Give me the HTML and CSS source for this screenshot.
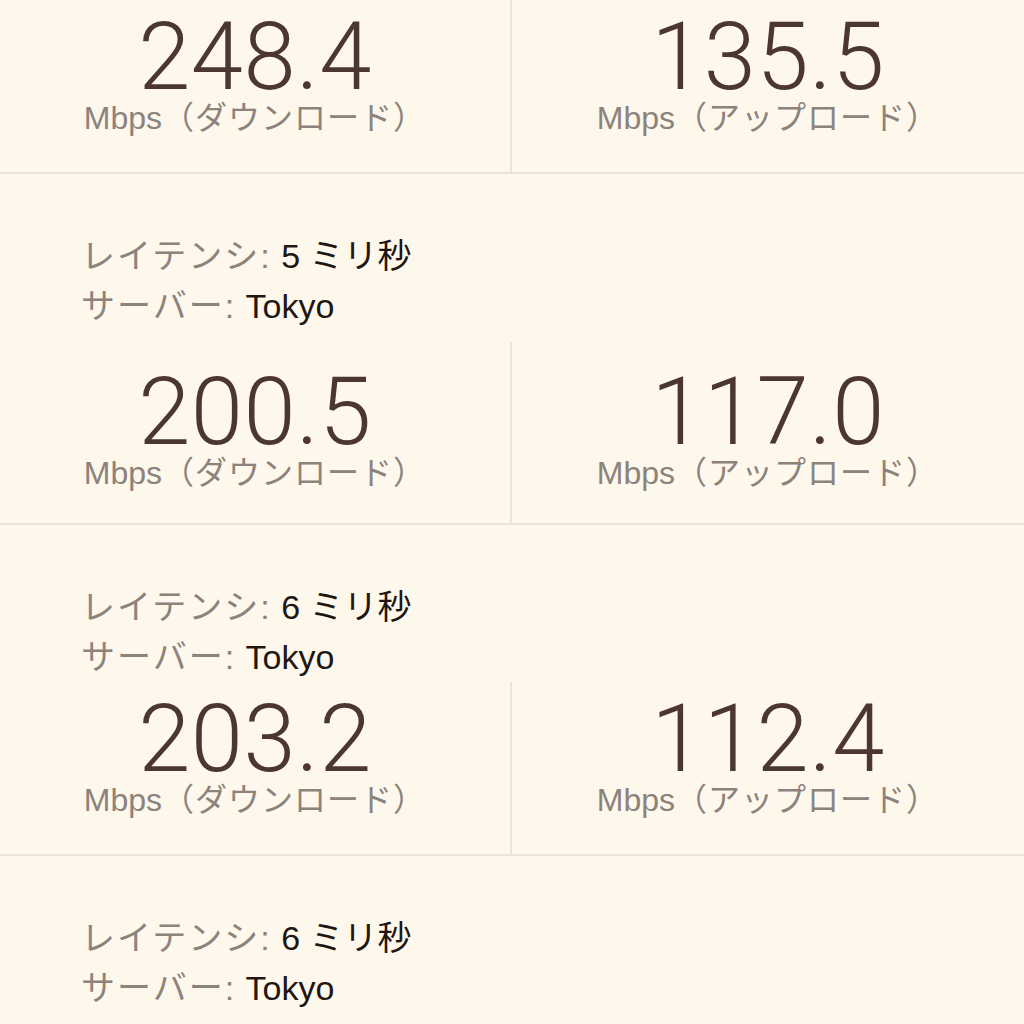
FILE: index.html
```html
<!DOCTYPE html>
<html>
<head>
<meta charset="UTF-8">
<title>speed results</title>
<link rel="stylesheet" href="styles.css">
</head>
<body>
<div class="results">

  <div class="speeds">
    <div class="speed">
      <div class="speed_value">248.4</div>
      <div class="speed_unit">Mbps<span class="jp">（ダウンロード）</span></div>
    </div>
    <div class="speed">
      <div class="speed_value">135.5</div>
      <div class="speed_unit">Mbps<span class="jp">（アップロード）</span></div>
    </div>
  </div>
  <div class="meta">
    <div class="meta_row"><span class="meta_label">レイテンシ:</span> <span class="meta_value">5 ミリ秒</span></div>
    <div class="meta_row"><span class="meta_label">サーバー:</span> <span class="meta_value">Tokyo</span></div>
  </div>

  <div class="speeds speeds_tall">
    <div class="speed">
      <div class="speed_value">200.5</div>
      <div class="speed_unit">Mbps<span class="jp">（ダウンロード）</span></div>
    </div>
    <div class="speed">
      <div class="speed_value">117.0</div>
      <div class="speed_unit">Mbps<span class="jp">（アップロード）</span></div>
    </div>
  </div>
  <div class="meta">
    <div class="meta_row"><span class="meta_label">レイテンシ:</span> <span class="meta_value">6 ミリ秒</span></div>
    <div class="meta_row"><span class="meta_label">サーバー:</span> <span class="meta_value">Tokyo</span></div>
  </div>

  <div class="speeds">
    <div class="speed">
      <div class="speed_value">203.2</div>
      <div class="speed_unit">Mbps<span class="jp">（ダウンロード）</span></div>
    </div>
    <div class="speed">
      <div class="speed_value">112.4</div>
      <div class="speed_unit">Mbps<span class="jp">（アップロード）</span></div>
    </div>
  </div>
  <div class="meta">
    <div class="meta_row"><span class="meta_label">レイテンシ:</span> <span class="meta_value">6 ミリ秒</span></div>
    <div class="meta_row"><span class="meta_label">サーバー:</span> <span class="meta_value">Tokyo</span></div>
  </div>

</div>
</body>
</html>
```

FILE: styles.css
```css
html, body {
  margin: 0px;
  height: 100%;
}

body {
  background: #fef7eb;
  font-family: "Liberation Sans", "Noto Sans CJK JP", sans-serif;
  overflow: hidden;
}

.speeds {
  display: grid;
  grid-template-columns: 1fr 1fr;
  border-bottom: 2px solid #ede3da;
}

.speed {
  box-sizing: border-box;
  height: 172px;
  padding-top: 12px;
  text-align: center;
}
.speed:first-child {
  border-right: 2px solid #ede3da;
}
.speeds_tall .speed {
  padding-top: 25px;
  height: 181px;
}

.speed_value {
  font: 300 94px/90px Roboto, "Liberation Sans", sans-serif;
  letter-spacing: 0.5px;
  color: #4b3630;
}

.speed_unit {
  font-size: 32px;
  line-height: 32px;
  color: #8c837d;
}
.speed_unit .jp {
  letter-spacing: 1px;
}

.meta {
  box-sizing: border-box;
  height: 157px;
  padding: 57px 0 0 81px;
  font-size: 34px;
  line-height: 50px;
}
.meta:nth-of-type(2) {
  height: 168px;
}

.meta_label {
  color: #8c837d;
  letter-spacing: 2px;
}
.meta_value {
  color: #1f1714;
}
```
